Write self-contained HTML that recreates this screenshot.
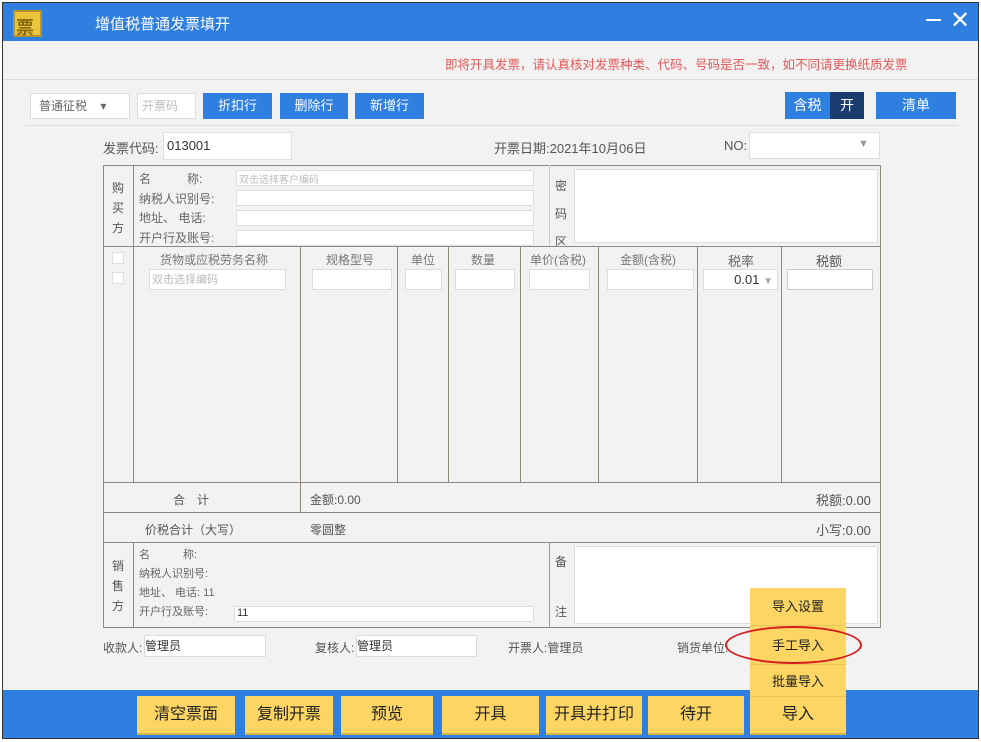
<!DOCTYPE html>
<html><head><meta charset="utf-8"><style>
*{margin:0;padding:0;box-sizing:border-box}
body{width:981px;height:742px;background:#fff;font-family:"Liberation Sans","Noto Sans CJK SC",sans-serif;position:relative;overflow:hidden;color:#555}
.a{position:absolute}
.win{left:2px;top:2px;width:977px;height:737px;background:#f2f2f2;border:1px solid #333}
.t{font-size:12px;white-space:nowrap}
.inp{background:#fff;border:1px solid #ddd}
.bb{background:#2f7fe0;color:#fff;font-size:13px;text-align:center;line-height:26px}
.vl{width:1px;background:#8f887c}
.hl{height:1px;background:#8f887c}
.yb{background:#fdd563;color:#222;font-size:16px;text-align:center;line-height:37px;border-bottom:2px solid #d9b44a}
.mi{background:#fdd563;color:#222;font-size:13px;text-align:center;border-bottom:1px solid #e8c45a}
</style></head><body>
<div class="a win"></div>
<div class="a" style="left:3px;top:3px;width:975px;height:38px;background:#2f7fe0"></div>
<div class="a" style="left:13px;top:10px;width:29px;height:27px;background:#e9c43c;border:2px solid #b8932a"></div>
<div class="a t" style="left:16px;top:14px;color:#8a6a10;font-size:18px;font-weight:bold">票</div>
<div class="a t" style="left:95px;top:13px;color:#fff;font-size:15px">增值税普通发票填开</div>
<div class="a" style="left:926px;top:19px;width:15px;height:2px;background:#fff"></div>
<div class="a t" style="left:950px;top:6px;color:#fff;font-size:24px">✕</div>
<div class="a t" style="left:445px;top:54px;color:#e05a5a;font-size:12.5px">即将开具发票，请认真核对发票种类、代码、号码是否一致，如不同请更换纸质发票</div>
<div class="a" style="left:3px;top:79px;width:975px;height:1px;background:#ddd"></div>
<div class="a inp t" style="left:30px;top:93px;width:100px;height:26px;line-height:24px;padding-left:8px;color:#666">普通征税 &nbsp;&nbsp;&nbsp;▾</div>
<div class="a inp t" style="left:137px;top:93px;width:59px;height:26px;line-height:24px;padding-left:4px;color:#bbb">开票码</div>
<div class="a bb" style="left:203px;top:93px;width:69px">折扣行</div>
<div class="a bb" style="left:280px;top:93px;width:68px">删除行</div>
<div class="a bb" style="left:355px;top:93px;width:69px">新增行</div>
<div class="a bb" style="left:785px;top:92px;width:45px;height:27px;font-size:14px">含税</div>
<div class="a bb" style="left:830px;top:92px;width:34px;height:27px;background:#1b3c6e;font-size:14px">开</div>
<div class="a bb" style="left:876px;top:92px;width:80px;height:27px;font-size:14px">清单</div>
<div class="a" style="left:25px;top:125px;width:933px;height:1px;background:#ddd"></div>
<div class="a t" style="left:103px;top:138px;font-size:13px;color:#555">发票代码:</div>
<div class="a inp t" style="left:163px;top:132px;width:129px;height:28px;line-height:26px;padding-left:3px;font-size:13px;color:#333">013001</div>
<div class="a t" style="left:494px;top:138px;font-size:13px;color:#555">开票日期:2021年10月06日</div>
<div class="a t" style="left:724px;top:138px;font-size:13px;color:#555">NO:</div>
<div class="a inp" style="left:749px;top:132px;width:131px;height:27px"></div>
<div class="a t" style="left:858px;top:138px;color:#999;font-size:11px">▼</div>
<!-- table frame -->
<div class="a" style="left:103px;top:165px;width:778px;height:463px;border:1px solid #8f887c"></div>
<div class="a vl" style="left:133px;top:165px;height:81px"></div>
<div class="a t" style="left:112px;top:178px;width:14px;line-height:20px;white-space:normal">购买方</div>
<div class="a t" style="left:139px;top:170px;line-height:19.5px;color:#666">名　　　称:<br>纳税人识别号:<br>地址、 电话:<br>开户行及账号:</div>
<div class="a inp t" style="left:236px;top:170px;width:298px;height:16px;font-size:10px;color:#bbb;padding-left:2px">双击选择客户编码</div>
<div class="a inp" style="left:236px;top:190px;width:298px;height:16px"></div>
<div class="a inp" style="left:236px;top:210px;width:298px;height:16px"></div>
<div class="a inp" style="left:236px;top:230px;width:298px;height:16px"></div>
<div class="a vl" style="left:549px;top:165px;height:81px;background:#ccc"></div>
<div class="a t" style="left:555px;top:172px;line-height:28px;width:12px;white-space:normal">密码区</div>
<div class="a inp" style="left:574px;top:169px;width:304px;height:74px"></div>
<div class="a hl" style="left:103px;top:246px;width:778px"></div>
<div class="a vl" style="left:133px;top:246px;height:236px"></div>
<div class="a vl" style="left:300px;top:246px;height:266px"></div>
<div class="a vl" style="left:397px;top:246px;height:236px"></div>
<div class="a vl" style="left:448px;top:246px;height:236px"></div>
<div class="a vl" style="left:520px;top:246px;height:236px"></div>
<div class="a vl" style="left:598px;top:246px;height:236px"></div>
<div class="a vl" style="left:697px;top:246px;height:236px"></div>
<div class="a vl" style="left:781px;top:246px;height:236px"></div>
<div class="a inp" style="left:112px;top:252px;width:12px;height:12px"></div>
<div class="a inp" style="left:112px;top:272px;width:12px;height:12px"></div>
<div class="a t" style="left:160px;top:251px;color:#777">货物或应税劳务名称</div>
<div class="a t" style="left:326px;top:251px;color:#777">规格型号</div>
<div class="a t" style="left:411px;top:251px;color:#777">单位</div>
<div class="a t" style="left:471px;top:251px;color:#777">数量</div>
<div class="a t" style="left:530px;top:251px;color:#777">单价(含税)</div>
<div class="a t" style="left:620px;top:251px;color:#777">金额(含税)</div>
<div class="a t" style="left:728px;top:251px;color:#666;font-size:13px">税率</div>
<div class="a t" style="left:816px;top:251px;color:#555;font-size:13px">税额</div>
<div class="a inp t" style="left:149px;top:269px;width:137px;height:21px;line-height:20px;color:#bbb;font-size:11px;padding-left:2px">双击选择编码</div>
<div class="a inp" style="left:312px;top:269px;width:80px;height:21px"></div>
<div class="a inp" style="left:405px;top:269px;width:37px;height:21px"></div>
<div class="a inp" style="left:455px;top:269px;width:60px;height:21px"></div>
<div class="a inp" style="left:529px;top:269px;width:61px;height:21px"></div>
<div class="a inp" style="left:607px;top:269px;width:87px;height:21px"></div>
<div class="a inp t" style="left:703px;top:269px;width:75px;height:21px;line-height:20px;text-align:right;padding-right:4px;font-size:13px;color:#333">0.01 <span style="color:#aaa;font-size:10px">▼</span></div>
<div class="a inp" style="left:787px;top:269px;width:86px;height:21px;border-color:#ccc"></div>
<div class="a hl" style="left:103px;top:482px;width:778px"></div>
<div class="a t" style="left:173px;top:491px">合　计</div>
<div class="a t" style="left:310px;top:491px">金额:0.00</div>
<div class="a t" style="left:816px;top:490px;font-size:13px">税额:0.00</div>
<div class="a hl" style="left:103px;top:512px;width:778px"></div>
<div class="a t" style="left:145px;top:521px">价税合计（大写）</div>
<div class="a t" style="left:310px;top:521px">零圆整</div>
<div class="a t" style="left:816px;top:520px;font-size:13px">小写:0.00</div>
<div class="a hl" style="left:103px;top:542px;width:778px"></div>
<div class="a vl" style="left:133px;top:542px;height:86px"></div>
<div class="a t" style="left:112px;top:556px;width:14px;line-height:20px;white-space:normal">销售方</div>
<div class="a t" style="left:139px;top:546px;line-height:19px;color:#666;font-size:11px">名　　　称:<br>纳税人识别号:<br>地址、 电话: 11<br>开户行及账号:</div>
<div class="a inp t" style="left:234px;top:606px;width:300px;height:16px;font-size:11px;padding-left:2px;color:#333">11</div>
<div class="a vl" style="left:549px;top:542px;height:86px;background:#999"></div>
<div class="a t" style="left:555px;top:550px;line-height:25px;width:12px;white-space:normal">备<br><br>注</div>
<div class="a inp" style="left:574px;top:546px;width:304px;height:78px"></div>
<div class="a t" style="left:103px;top:639px">收款人:</div>
<div class="a inp t" style="left:144px;top:635px;width:122px;height:22px;line-height:21px;color:#333">管理员</div>
<div class="a t" style="left:315px;top:639px">复核人:</div>
<div class="a inp t" style="left:356px;top:635px;width:121px;height:22px;line-height:21px;color:#333">管理员</div>
<div class="a t" style="left:508px;top:639px">开票人:管理员</div>
<div class="a t" style="left:677px;top:639px">销货单位:</div>
<!-- bottom bar -->
<div class="a" style="left:3px;top:690px;width:975px;height:48px;background:#2f7fe0"></div>
<div class="a yb" style="left:137px;top:696px;width:98px">清空票面</div>
<div class="a yb" style="left:245px;top:696px;width:88px">复制开票</div>
<div class="a yb" style="left:341px;top:696px;width:92px">预览</div>
<div class="a yb" style="left:442px;top:696px;width:97px">开具</div>
<div class="a yb" style="left:546px;top:696px;width:96px">开具并打印</div>
<div class="a yb" style="left:648px;top:696px;width:96px">待开</div>
<div class="a yb" style="left:750px;top:696px;width:96px">导入</div>
<div class="a mi" style="left:750px;top:588px;width:96px;height:38px;line-height:38px">导入设置</div>
<div class="a mi" style="left:750px;top:626px;width:96px;height:39px;line-height:39px">手工导入</div>
<div class="a mi" style="left:750px;top:665px;width:96px;height:32px;line-height:34px">批量导入</div>
<div class="a" style="left:725px;top:626px;width:137px;height:38px;border:2px solid #d41c1c;border-radius:50%"></div>
</body></html>
